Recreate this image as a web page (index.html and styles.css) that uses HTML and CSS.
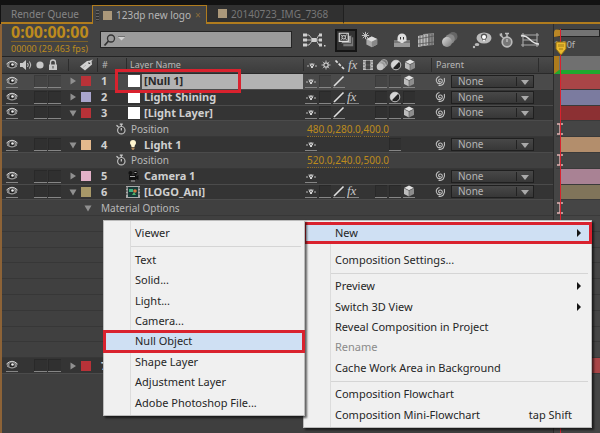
FILE: index.html
```html
<!DOCTYPE html>
<html lang="en">
<head>
<meta charset="utf-8">
<title>Timeline</title>
<link rel="stylesheet" href="styles.css">
</head>
<body>
<svg class="defs" aria-hidden="true">
  <defs>
    <linearGradient id="ball" x1="0" y1="0" x2="1" y2="1"><stop offset="0" stop-color="#ddd"/><stop offset="1" stop-color="#777"/></linearGradient>
    <symbol id="eye" viewBox="0 0 12 12"><path d="M.5 6Q6-.5 11.500 6 6 11.500.500 6Z" fill="#8d8d8d"/><path d="M.5 5Q6-.5 11.500 5" fill="none" stroke="#d6d6d6"/><circle cx="6" cy="6" r="2.600" fill="#222"/><circle cx="6.500" cy="5.500" r="1.300" fill="#f0f0f0"/><path d="M1 7Q6 11 11 7" fill="none" stroke="#c4c4c4" stroke-width=".8"/></symbol>
    <symbol id="speaker" viewBox="0 0 14 12"><path d="M1 4h2.500L7 1v10L3.500 8H1Z" fill="#c9c9c9"/><path d="M8.500 4q1.500 2 0 4M10.500 2.500q2.600 3.500 0 7" fill="none" stroke="#c9c9c9"/></symbol>
    <symbol id="dot" viewBox="0 0 12 12"><circle cx="6" cy="6" r="3.600" fill="#c8c8c8"/></symbol>
    <symbol id="lock" viewBox="0 0 12 12"><path d="M3.500 6V3.500a2.500 2.500 0 0 1 5 0V6" fill="none" stroke="#c8c8c8" stroke-width="1.300"/><path d="M2 5.500h8V11H2Z" fill="#c8c8c8"/><path d="M6 7v2.500" stroke="#444"/></symbol>
    <symbol id="tag" viewBox="0 0 14 12"><path d="M1 7.500 8 2l4.500-.5.5 4L6 11.500Z" fill="#d0d0d0"/><circle cx="10.300" cy="4" r="1" fill="#333"/><path d="M10.500 4Q11 1 13.500 1" fill="none" stroke="#ddd" stroke-width=".8"/><path d="m4 8.500 3-2.500" stroke="#999" stroke-width=".6"/></symbol>
    <symbol id="right" viewBox="0 0 8 10"><path d="M1.500 1.500 7 5 1.500 8.500Z" fill="#909090"/></symbol>
    <symbol id="down" viewBox="0 0 8 10"><path d="M.5 2.500h7L4 8.500Z" fill="#909090"/></symbol>
    <symbol id="shy" viewBox="0 0 12 12"><path d="M1 7h2M9 7h2" stroke="#bbb"/><path d="M4 7V5.500L5 4.500h2l1 1V7L7 7.500V9H5V7.500Z" fill="#d2d2d2"/><path d="M3 5h6" stroke="#999" stroke-width=".8"/><path d="M5.300 6.500h1.400" stroke="#333" stroke-width=".8"/></symbol>
    <symbol id="sun" viewBox="0 0 12 12"><circle cx="6" cy="6" r="2.200" fill="none" stroke="#d0d0d0" stroke-width="1.300"/><path d="M6 1.500V3M6 9v1.500M1.500 6H3M9 6h1.500M2.800 2.800l1 1M8.200 8.200l1 1M9.200 2.800l-1 1M3.800 8.200l-1 1" stroke="#bbb"/></symbol>
    <symbol id="dashes" viewBox="0 0 12 12"><path d="m1.500 1.500 9 9" stroke="#ddd" stroke-width="1.700" stroke-dasharray="3 1.500"/></symbol>
    <symbol id="slash" viewBox="0 0 12 12"><path d="m1 11 9.500-9.500" stroke="#e0e0e0" stroke-width="1.600"/></symbol>
    <symbol id="film" viewBox="0 0 12 12"><path d="M1 1h10v10H1Z" fill="#bebebe"/><path d="M4 2h4v3.500H4ZM4 6.500h4V10H4ZM2 2v1.500M2 5v1.500M2 8v1.500M10 2v1.500M10 5v1.500M10 8v1.500" fill="#444" stroke="#444" stroke-width=".8"/></symbol>
    <symbol id="blur" viewBox="0 0 12 12"><circle cx="8" cy="4" r="3.500" fill="#777" stroke="#bbb" stroke-width=".7"/><circle cx="6" cy="6" r="3.500" fill="#999" stroke="#c5c5c5" stroke-width=".7"/><circle cx="4.200" cy="7.800" r="3.500" fill="#c5c5c5"/></symbol>
    <symbol id="adjust" viewBox="0 0 12 12"><circle cx="6" cy="6" r="4.800" fill="#222" stroke="#bdbdbd"/><path d="M2.600 9.400A4.800 4.800 0 0 1 9.400 2.600Z" fill="#d5d5d5"/></symbol>
    <symbol id="cube" viewBox="0 0 12 12"><path d="m6 .5 5 2.500-5 2.500L1 3Z" fill="#e2e2e2"/><path d="m1 3 5 2.500v6L1 9Z" fill="#bdbdbd"/><path d="M11 3 6 5.500v6L11 9Z" fill="#8d8d8d"/><path d="M6 5.500v6M6 5.500 1 3M6 5.500 11 3" fill="none" stroke="#444" stroke-width=".5"/></symbol>
    <symbol id="swirl" viewBox="0 0 12 12"><path d="M6.500 6.300C6 7.300 4.300 6.600 4.600 5.200 5 3.500 7.900 3.600 8.300 5.700 8.700 8.200 5.500 9.500 3.500 8 1.200 6.200 2.100 2 5.500 1.500M4.500 10.200C8.500 11.200 11.500 8 10.300 3" fill="none" stroke="#c2c2c2" stroke-width="1.100"/></symbol>
    <symbol id="watch" viewBox="0 0 12 12"><circle cx="6.300" cy="7.200" r="3.700" fill="#383838" stroke="#bbb" stroke-width="1.200"/><path d="M6.300 7.500V5M4.800 1.200h3M6.300 1.200v2M1.500 2.200l2 1.800" fill="none" stroke="#ccc" stroke-width="1.200"/></symbol>
    <symbol id="bulb" viewBox="0 0 12 12"><path d="M6 1a3 3 0 0 0-3 3c0 1.500 1.500 2 1.500 4h3C7.500 6 9 5.500 9 4a3 3 0 0 0-3-3Z" fill="#fff5cf"/><path d="M4.500 8.500h3V10L6 11.300 4.500 10Z" fill="#b18a5d"/></symbol>
    <symbol id="camera" viewBox="0 0 12 12"><circle cx="3.500" cy="3" r="2.100" fill="#111"/><circle cx="8.500" cy="2.800" r="2.100" fill="#111"/><path d="M2 5h7v1.500L11.500 5v5L9 8.700V10H2Z" fill="#111"/><path d="M3 6.500h5M7.500 2.500h2M4 11h4" stroke="#aaa"/></symbol>
    <symbol id="comp" viewBox="0 0 14 12"><path d="M0 0h14v12H0Z" fill="#aaa"/><path d="M2 1h10v10H2Z" fill="#173a37"/><path d="M0 2h1.500M0 5h1.500M0 8h1.500M12.500 2H14M12.500 5H14M12.500 8H14" stroke="#333"/><path d="M3 3h4v3H3Z" fill="#3fb080"/><circle cx="9" cy="5" r="1.800" fill="#d6773f"/><path d="m6 9 2-3 2 3Z" fill="#4db16b"/></symbol>
    <symbol id="ibeam" viewBox="0 0 8 12"><path d="M1 1h6M4 1v10M1 11h6" fill="none" stroke="#e6b3b3" stroke-width="1.400"/></symbol>
  </defs>
</svg>

<div class="app">
  <nav class="tabs">
    <button class="tab tab-queue">Render Queue</button>
    <button class="tab tab-active"><i class="grip"></i><i class="chip"></i>123dp new logo<span class="close">×</span></button>
    <button class="tab tab-other"><i class="chip"></i>20140723_IMG_7368</button>
    <span class="tab-rest"></span>
  </nav>

  <main class="panel">
    <section class="layers">
      <header class="toolbar">
        <div class="clock"><b>0:00:00:00</b><span>00000 (29.463 fps)</span></div>
        <label class="search">
          <svg viewBox="0 0 24 14"><circle cx="8" cy="5.500" r="3.500" fill="none" stroke="#333" stroke-width="1.300"/><path d="m5.500 8-4 4.500" stroke="#333" stroke-width="1.800"/><path d="M15 4h7l-3.500 3.500Z" fill="#d0d0d0"/><path d="M15 3.500h7" stroke="#666" stroke-width=".8"/></svg>
          <input type="search" aria-label="Search layers">
        </label>
        <div class="tools">
          <button class="tool tool-flow" aria-label="Mini-Flowchart"><svg viewBox="0 0 24 18"><path d="M3 4h4l4 5h3l3-5h3M3 9h17M3 14h4l4-5M14 9l3 5h3" fill="none" stroke="#bbb"/><path d="M1 2.500h4v3H1ZM1 7.500h4v3H1ZM1 12.500h4v3H1ZM9.500 7h5v4h-5ZM17 2.500h3v3h-3ZM17 7.500h3v3h-3ZM17 12.500h3v3h-3ZM22 14h1.500v1.500H22Z" fill="#d0d0d0"/></svg></button>
          <button class="tool tool-live" aria-label="Live Update"><svg viewBox="0 0 20 20"><path d="M7 7h11v10H7Z" fill="#777"/><path d="M5 5h11v9H5Z" fill="#999" stroke="#444"/><path d="M2.500 2.500h10v9h-10Z" fill="#333" stroke="#ddd" stroke-width="1.300"/><path d="m4 4 7 6M11 4l-7 6" stroke="#ccc"/><circle cx="7.500" cy="7" r="2" fill="#444" stroke="#ddd"/></svg></button>
          <button class="tool tool-draft" aria-label="Draft 3D"><svg viewBox="0 0 20 20"><path d="M5 1v8M1 5h8M2 2l6 6M8 2 2 8" stroke="#ccc"/><path d="m12 6 6 3v6l-6 3-6-3V9Z" fill="#aaa"/><path d="m12 6 6 3-6 3-6-3Z" fill="#ddd"/><path d="M12 12v6l6-3V9Z" fill="#888"/></svg></button>
          <button class="tool tool-shy" aria-label="Hide Shy Layers"><svg viewBox="0 0 20 18"><path d="M2 9h16v6H2Z" fill="#777"/><path d="M5.500 10V7a4.500 4.500 0 0 1 9 0v3l-3 1v2h-3v-2Z" fill="#dedede"/><path d="M8.500 6v2.500M11.500 6v2.500" stroke="#333"/><path d="M2 12h16v4H2Z" fill="#999"/></svg></button>
          <button class="tool tool-frame" aria-label="Frame Blending"><svg viewBox="0 0 20 18"><path d="m7 3 11-1v12L7 15Z" fill="#888"/><path d="m2 5 10-2v11L2 16Z" fill="#bbb"/><path d="M4 5v10M7 4v11M10 4v10M13 3v11M16 3v11M2 8l16-3M2 13l16-2" stroke="#555" stroke-width=".8"/></svg></button>
          <button class="tool tool-motion" aria-label="Motion Blur"><svg viewBox="0 0 20 18"><circle cx="13" cy="5.500" r="4.500" fill="#666"/><circle cx="10" cy="8" r="4.800" fill="#888"/><circle cx="7" cy="11" r="5" fill="url(#ball)"/></svg></button>
          <button class="tool tool-brain" aria-label="Brainstorm"><svg viewBox="0 0 20 18"><ellipse cx="12" cy="7" rx="7.500" ry="5.500" fill="#bbb"/><ellipse cx="5" cy="13.500" rx="2.300" ry="1.600" fill="#bbb"/><circle cx="2" cy="16" r="1.200" fill="#bbb"/><path d="M12 2.500a3.200 3.200 0 0 0-3.200 3.200c0 1.600 1.500 1.800 1.800 3.800h2.800c.3-2 1.800-2.200 1.800-3.800A3.200 3.200 0 0 0 12 2.500Z" fill="#555"/><circle cx="12" cy="6" r="2" fill="#fff"/><path d="M11 9.500h2" stroke="#eee" stroke-width="1.500"/></svg></button>
          <button class="tool tool-watch" aria-label="Auto-keyframe"><svg viewBox="0 0 18 18"><circle cx="10" cy="11" r="4.800" fill="#777" stroke="#bbb" stroke-width="1.700"/><path d="M8 2.500h4M10 2.500V6M3 4l3.500 3M10 11V8" fill="none" stroke="#bbb" stroke-width="1.500"/><path d="m2 3 3-1 .5 3.500Z" fill="#bbb"/></svg></button>
          <button class="tool tool-graph" aria-label="Graph Editor"><svg viewBox="0 0 20 18"><path d="M1 4h18M1 14h18M3 2v14M17 2v14M3 9h14" fill="none" stroke="#aaa" stroke-width="1.100"/><path d="M1 5C9 3 10 13 19 13" fill="none" stroke="#e5e5e5" stroke-width="1.500"/></svg></button>
        </div>
      </header>

      <div class="row heading">
        <span class="av"><svg><use href="#eye"/></svg><svg class="wide"><use href="#speaker"/></svg><svg><use href="#dot"/></svg><svg><use href="#lock"/></svg></span>
        <span class="tagcell"><svg class="wide"><use href="#tag"/></svg></span>
        <span class="num">#</span>
        <span class="title">Layer Name</span>
        <span class="switches"><svg><use href="#shy"/></svg><svg><use href="#sun"/></svg><svg><use href="#dashes"/></svg><em>fx</em><svg><use href="#film"/></svg><svg><use href="#blur"/></svg><svg><use href="#adjust"/></svg><svg><use href="#cube"/></svg></span>
        <span class="parent">Parent</span>
      </div>

      <div class="rows">
        <div class="row layer selected">
          <svg class="eye sw"><use href="#eye"/></svg><span class="locks"><i class="sw"></i><i class="sw"></i></span><svg class="twirl"><use href="#right"/></svg><i class="swatch red"></i><b class="num">1</b><i class="solid"></i><b class="name">[Null 1]</b><i class="callout"></i>
          <span class="switches"><svg class="sw"><use href="#shy"/></svg><i class="sw"></i><svg class="sw"><use href="#slash"/></svg><i></i><i></i><i class="sw"></i><i class="sw"></i><svg class="sw"><use href="#cube"/></svg></span>
          <span class="parent"><svg><use href="#swirl"/></svg><span class="drop"><select aria-label="Parent of layer 1"><option>None</option></select></span></span>
        </div>
        <div class="row layer">
          <svg class="eye sw"><use href="#eye"/></svg><span class="locks"><i class="sw"></i><i class="sw"></i></span><svg class="twirl"><use href="#right"/></svg><i class="swatch lavender"></i><b class="num">2</b><i class="solid"></i><b class="name">Light Shining</b>
          <span class="switches"><svg class="sw"><use href="#shy"/></svg><i class="sw"></i><svg class="sw"><use href="#slash"/></svg><em class="sw">fx</em><i></i><i class="sw"></i><svg class="sw"><use href="#adjust"/></svg><i class="sw"></i></span>
          <span class="parent"><svg><use href="#swirl"/></svg><span class="drop"><select aria-label="Parent of layer 2"><option>None</option></select></span></span>
        </div>
        <div class="row layer">
          <svg class="eye sw"><use href="#eye"/></svg><span class="locks"><i class="sw"></i><i class="sw"></i></span><svg class="twirl"><use href="#down"/></svg><i class="swatch red"></i><b class="num">3</b><i class="solid"></i><b class="name">[Light Layer]</b>
          <span class="switches"><svg class="sw"><use href="#shy"/></svg><i class="sw"></i><svg class="sw"><use href="#slash"/></svg><i></i><i></i><i class="sw"></i><i class="sw"></i><svg class="sw"><use href="#cube"/></svg></span>
          <span class="parent"><svg><use href="#swirl"/></svg><span class="drop"><select aria-label="Parent of layer 3"><option>None</option></select></span></span>
        </div>
        <div class="row property"><svg class="watch"><use href="#watch"/></svg><span class="label">Position</span><span class="values"><u>480.0</u>,<u>280.0</u>,<u>400.0</u></span></div>
        <div class="row layer">
          <svg class="eye sw"><use href="#eye"/></svg><span class="locks"><i class="sw"></i><i class="sw"></i></span><svg class="twirl"><use href="#down"/></svg><i class="swatch peach"></i><b class="num">4</b><svg class="kind"><use href="#bulb"/></svg><b class="name">Light 1</b>
          <span class="switches"><svg class="sw"><use href="#shy"/></svg><i></i><i></i><i></i><i></i><i></i><i class="sw"></i><i></i></span>
          <span class="parent"><svg><use href="#swirl"/></svg><span class="drop"><select aria-label="Parent of layer 4"><option>None</option></select></span></span>
        </div>
        <div class="row property"><svg class="watch"><use href="#watch"/></svg><span class="label">Position</span><span class="values"><u>520.0</u>,<u>240.0</u>,<u>500.0</u></span></div>
        <div class="row layer">
          <svg class="eye sw"><use href="#eye"/></svg><span class="locks"><i class="sw"></i><i class="sw"></i></span><svg class="twirl"><use href="#right"/></svg><i class="swatch pink"></i><b class="num">5</b><svg class="kind"><use href="#camera"/></svg><b class="name">Camera 1</b>
          <span class="switches"><svg class="sw"><use href="#shy"/></svg></span>
          <span class="parent"><svg><use href="#swirl"/></svg><span class="drop"><select aria-label="Parent of layer 5"><option>None</option></select></span></span>
        </div>
        <div class="row layer">
          <svg class="eye sw"><use href="#eye"/></svg><span class="locks"><i class="sw"></i><i class="sw"></i></span><svg class="twirl"><use href="#down"/></svg><i class="swatch sand"></i><b class="num">6</b><svg class="kind"><use href="#comp"/></svg><b class="name">[LOGO_Ani]</b>
          <span class="switches"><svg class="sw"><use href="#shy"/></svg><i class="sw"></i><svg class="sw"><use href="#slash"/></svg><em class="sw">fx</em><i></i><i class="sw"></i><i class="sw"></i><svg class="sw"><use href="#cube"/></svg></span>
          <span class="parent"><svg><use href="#swirl"/></svg><span class="drop"><select aria-label="Parent of layer 6"><option>None</option></select></span></span>
        </div>
        <div class="row property group"><svg class="twirl"><use href="#down"/></svg><span class="label">Material Options</span></div>
        <div class="row property"></div><div class="row property"></div><div class="row property"></div>
        <div class="row property"></div><div class="row property"></div><div class="row property"></div>
        <div class="row property"></div><div class="row property"></div><div class="row property"></div>
        <div class="row layer">
          <svg class="eye sw"><use href="#eye"/></svg><span class="locks"><i class="sw"></i><i class="sw"></i></span><svg class="twirl"><use href="#right"/></svg><i class="swatch red"></i><b class="num">7</b>
        </div>
      </div>
    </section>

    <section class="timeline">
      <div class="ruler"><div class="navigator"></div><span class="tick">1:00f</span></div>
      <div class="workarea"></div>
      <div class="rows">
        <div class="track bar rose"></div><div class="track bar slate"></div><div class="track bar crimson"></div>
        <div class="track"><svg><use href="#ibeam"/></svg></div>
        <div class="track bar tan"></div>
        <div class="track"><svg><use href="#ibeam"/></svg></div>
        <div class="track bar mauve"></div><div class="track bar olive"></div>
        <div class="track"><svg><use href="#ibeam"/></svg></div>
        <div class="track"></div><div class="track"></div><div class="track"></div>
        <div class="track"></div><div class="track"></div><div class="track"></div>
        <div class="track"></div><div class="track"></div><div class="track"></div>
        <div class="track bar rose"></div>
      </div>
      <div class="playhead"><svg viewBox="0 0 12 15"><path d="M1 1h10v7l-5 6-5-6Z" fill="#e9b92e" stroke="#8c6b14"/><path d="M4 3v3M6 3v3M8 3v3M4 8h4" stroke="#8c6b14" stroke-width=".8"/></svg></div>
    </section>
  </main>

  <div class="menu menu-main">
    <button class="current">New<i class="more"></i></button>
    <hr class="clear">
    <button>Composition Settings...</button>
    <hr>
    <button>Preview<i class="more"></i></button>
    <button>Switch 3D View<i class="more"></i></button>
    <button>Reveal Composition in Project</button>
    <button disabled>Rename</button>
    <button>Cache Work Area in Background</button>
    <hr>
    <button>Composition Flowchart</button>
    <button>Composition Mini-Flowchart<kbd>tap Shift</kbd></button>
  </div>
  <div class="menu menu-new">
    <button>Viewer</button>
    <hr>
    <button>Text</button>
    <button>Solid...</button>
    <button>Light...</button>
    <button>Camera...</button>
    <button class="current">Null Object</button>
    <button>Shape Layer</button>
    <button>Adjustment Layer</button>
    <button>Adobe Photoshop File...</button>
  </div>
</div>
</body>
</html>
```
FILE: styles.css
```css
:root {
  --gold: #b07c1e;
  --mark: #d9222e;
  --line: #4b4b4b;
}
* { box-sizing: border-box; }
html, body { height: 100%; }
body {
  margin: 0;
  background: #3f3f3f;
  color: #b8b8b8;
  font-family: "Noto Sans", "Open Sans", sans-serif;
  font-size: 10px;
  line-height: 14px;
  overflow: hidden;
}
button, select, input {
  margin: 0;
  padding: 0;
  border: 0;
  border-radius: 0;
  background: none;
  color: inherit;
  font: inherit;
}
svg { display: block; width: 12px; height: 12px; flex: none; }
i { display: block; }
.defs { position: absolute; width: 0; height: 0; }
.app { position: relative; min-height: 100%; display: flex; flex-direction: column; }

/* Tabs */
.tabs {
  display: flex;
  height: 24px;
  padding-top: 5px;
  padding-left: 1px;
  background: #121212;
}
.tab {
  display: flex;
  align-items: center;
  gap: 4px;
  border-bottom: 2px solid var(--gold);
  background: #303030;
  color: #777;
  white-space: nowrap;
}
.tab-queue { width: 91px; padding-left: 10px; background: #363636; color: #858585; }
.tab-active {
  width: 115px;
  padding-left: 3px;
  border: 1px solid var(--gold);
  border-bottom: 0;
  background: #434343;
  color: #b5b5b5;
}
.tab-other { width: 137px; padding-left: 11px; border-right: 1px solid #202020; }
.tab-rest { flex: 1; border-bottom: 2px solid var(--gold); background: #353535; }
.chip { width: 9px; height: 9px; background: #ab987a; }
.grip { width: 3px; height: 11px; background: repeating-linear-gradient(#666 0 1px, #333 1px 3px); }
.close { color: #8a6d3a; }

/* Panel */
.panel { flex: 1; display: flex; border-left: 2px solid #8d6337; }
.layers { width: 551px; flex: none; }
.timeline { position: relative; flex: 1; background: #454545; border-left: 1px solid #2c2c2c; }
.rows { display: grid; grid-template-rows: repeat(19, 1fr); height: 300px; }

/* Toolbar */
.toolbar { display: flex; height: 32px; background: #434343; }
.clock { width: 98px; padding-left: 9px; color: #bd8b1d; white-space: nowrap; }
.clock b { display: block; font-size: 16px; line-height: 17px; }
.clock span { display: block; width: 77px; border-top: 1px solid #7d6128; font-size: 9px; line-height: 13px; }
.search {
  display: flex;
  align-items: center;
  width: 192px;
  height: 17px;
  margin-top: 7px;
  padding-left: 2px;
  border: 1px solid #242424;
  background: #9b9b9b;
}
.search svg { width: 24px; height: 14px; }
.search input { flex: 1; min-width: 0; height: 100%; color: #222; outline: 0; }
.tools { flex: 1; display: flex; align-items: center; padding-left: 10px; }
.tool { display: grid; place-items: center; width: 20px; height: 22px; }
.tool svg { width: 20px; height: 18px; }
.tool-flow, .tool-flow svg { width: 24px; }
.tool-live { margin: 0 3px 0 9px; width: 22px; height: 23px; border: 2px solid #151515; background: #333; }
.tool-live svg { width: 18px; }
.tool-shy { margin-left: 12px; }
.tool-frame { margin-left: 4px; }
.tool-motion { margin-left: 4px; }
.tool-brain { margin-left: 12px; }
.tool-watch { margin-left: 4px; }
.tool-graph { margin-left: 4px; }

/* Layer rows */
.row {
  position: relative;
  display: grid;
  grid-template-columns: 32px 34px 13px 16px 29px 16px 161px 128px 1fr;
  align-items: center;
  white-space: nowrap;
}
.heading {
  height: 18px;
  border-top: 1px solid #242424;
  border-bottom: 1px solid #2a2a2a;
  background: linear-gradient(#4b4b4b, #3c3c3c);
}
.heading .av { grid-column: 1 / 3; display: flex; gap: 1px; padding-left: 4px; }
.heading .wide { width: 14px; }
.heading .tagcell { grid-column: 3 / 5; padding-left: 10px; border-left: 1px solid #2c2c2c; }
.heading .num { border-left: 1px solid #2c2c2c; padding-left: 4px; font-size: 9px; }
.heading .title { grid-column: 6 / 8; padding-left: 3px; font-size: 9px; border-left: 1px solid #2c2c2c; }
.heading .switches { border-left: 1px solid #2c2c2c; }
.heading .parent { padding-left: 4px; border-left: 1px solid #2c2c2c; border-right: 1px solid #2c2c2c; margin-right: 14px; font-size: 9px; }
.layer { background: #343434; border-bottom: 1px solid var(--line); color: #cfcfcf; font-size: 11px; }
.layer.selected { background: #4a4a4a; }
.property { background: #404040; border-bottom: 1px solid #373737; }
.eye { margin-left: 4px; }
.sw { height: 13px; border-bottom: 1px solid #858585; }
i.sw { background: #303030; box-shadow: inset 1px 1px #292929; }
.selected i.sw { background: #444; box-shadow: inset 1px 1px #3b3b3b; }
.locks { display: flex; gap: 1px; }
.locks .sw { width: 13px; }
.twirl { width: 8px; height: 10px; margin-left: 1px; }
.swatch { width: 10px; height: 10px; }
.num { padding-left: 4px; }
.solid { width: 12px; height: 12px; background: #fff; margin-left: 2px; }
.kind { width: 14px; }
.name { padding-left: 2px; line-height: 14px; }
.selected .name { align-self: stretch; background: #b2b2b2; color: #292929; }
.switches { display: flex; align-items: center; gap: 2px; padding-left: 2px; }
.switches > * { width: 12px; flex: none; }
.switches em { font: italic 13px/12px "Liberation Serif", serif; color: #c8c8c8; }
.parent { display: flex; align-items: center; gap: 5px; padding-left: 3px; }
.drop {
  position: relative;
  width: 83px;
  height: 13px;
  border: 1px solid #1f1f1f;
  background: linear-gradient(#484848, #373737);
}
.drop select { display: block; appearance: none; width: 100%; height: 11px; padding-left: 6px; font-size: 10px; line-height: 11px; color: #b5b5b5; outline: 0; }
.drop::before, .drop::after { content: ""; position: absolute; pointer-events: none; }
.drop::before { right: 16px; top: 1px; bottom: 1px; width: 1px; background: #222; }
.drop::after { right: 4px; top: 4px; border: solid transparent; border-width: 5px 4px 0; border-top-color: #aaa; }
.property .watch { grid-column: 5; margin-left: 18px; }
.property .label { grid-column: 6 / 8; padding-left: 5px; }
.property .values { color: #bd8b1d; padding-left: 4px; line-height: 12px; }
.values u { text-decoration: none; border-bottom: 1px dotted #8d6b26; }
.group .twirl { grid-column: 4; margin-left: 3px; }
.group .label { grid-column: 5 / 8; padding-left: 4px; }
.callout {
  position: absolute;
  z-index: 2;
  left: 113px;
  top: -5px;
  width: 126px;
  height: 24px;
  border: 3px solid var(--mark);
}
.red { background: #b83238; }
.lavender { background: #a9a5cd; }
.peach { background: #e3b98d; }
.pink { background: #e2b1c8; }
.sand { background: #a89868; }

/* Timeline */
.ruler { height: 32px; padding-top: 5px; background: #434343; overflow: hidden; }
.navigator { height: 8px; border: 1px solid #222; border-left: 7px solid #b98726; border-radius: 4px 0 0 0; background: #737373; }
.tick { display: block; padding-top: 1px; font-size: 9px; }
.workarea { height: 18px; border-left: 5px solid #ad7b1d; border-bottom: 4px solid #1fa82f; background: #707070; }
.track { display: flex; justify-content: flex-start; align-items: center; margin-left: 2px; border-bottom: 1px solid #3a3a3a; }
.bar { margin-left: 7px; }
.rose { background: #a94547; }
.slate { background: #7b7b9f; }
.crimson { background: #8c3033; }
.tan { background: #b38e6c; }
.mauve { background: #a98294; }
.olive { background: #80745a; }
.track svg { width: 8px; }
.playhead { position: absolute; left: 6px; top: 5px; bottom: 0; border-left: 1px solid var(--mark); }
.playhead svg { position: absolute; left: -6px; top: 12px; width: 12px; height: 15px; }

/* Menus */
.menu {
  position: absolute;
  z-index: 5;
  top: 220px;
  display: flex;
  flex-direction: column;
  padding: 2px 0;
  border: 1px solid #bbb;
  background: linear-gradient(90deg, transparent 26px, #dcdcdc 26px 27px, transparent 27px) #f0f0f0;
  box-shadow: 2px 2px 2px rgb(0 0 0 / 60%);
  color: #262626;
  font-size: 11px;
}
.menu-main { left: 303px; width: 289px; height: 208px; }
.menu-new { left: 103px; width: 202px; height: 196px; }
.menu button {
  flex: 1;
  display: flex;
  align-items: center;
  min-height: 0;
  padding: 0 10px 0 31px;
  line-height: 18px;
  text-align: left;
  white-space: nowrap;
}
.menu button:disabled { color: #8b8b8b; }
.menu hr { width: calc(100% - 30px); height: 6px; margin: 0 3px 0 27px; border: 0; background: linear-gradient(transparent 3px, #d5d5d5 3px 4px, transparent 4px); }
.menu hr.clear { background: none; }
.menu .current { background: #cfe0f3; outline: 3px solid var(--mark); outline-offset: -2px; }
.more { margin-left: auto; border: solid transparent; border-width: 4px 0 4px 4px; border-left-color: #151515; }
kbd { margin-left: auto; padding-right: 9px; font: inherit; }
```
